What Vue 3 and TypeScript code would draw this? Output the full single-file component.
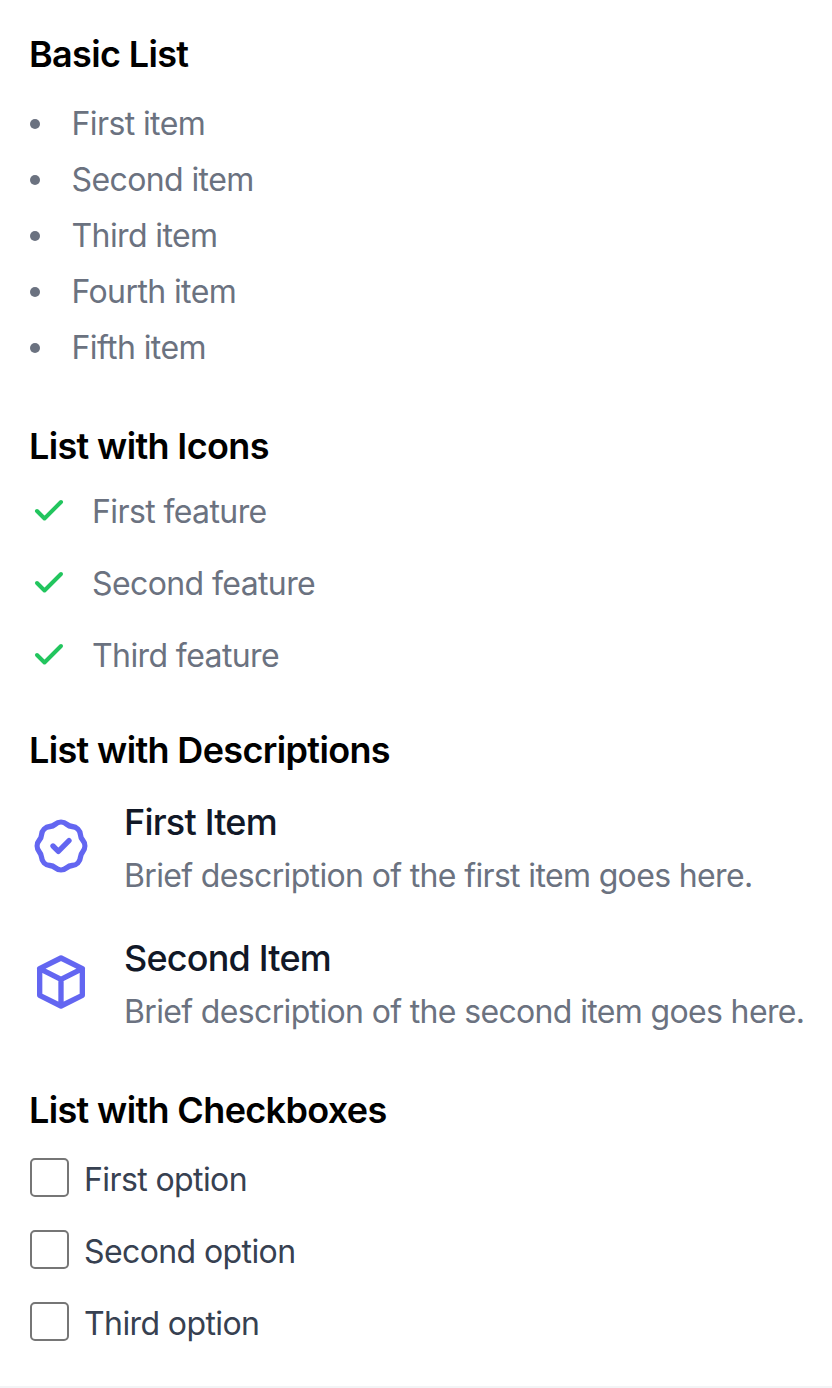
<script setup lang="ts">
const basic: string[] = ['First item', 'Second item', 'Third item', 'Fourth item', 'Fifth item']
const features: string[] = ['First feature', 'Second feature', 'Third feature']
const options: string[] = ['First option', 'Second option', 'Third option']
</script>

<template>
  <main class="page">
    <section class="basic">
      <h2>Basic List</h2>
      <ul class="disc">
        <li v-for="item in basic" :key="item">{{ item }}</li>
      </ul>
    </section>

    <section class="icons">
      <h2>List with Icons</h2>
      <ul class="features">
        <li v-for="item in features" :key="item">
          <svg class="check" viewBox="0 0 24 24" fill="none" stroke="currentColor" stroke-width="2.67" stroke-linecap="round" stroke-linejoin="round">
            <path d="M20 6L9 17l-5-5" />
          </svg>
          <span>{{ item }}</span>
        </li>
      </ul>
    </section>

    <section class="descriptions">
      <h2>List with Descriptions</h2>
      <ul class="desc">
        <li>
          <svg class="big" viewBox="0 0 24 24" fill="none" stroke="currentColor" stroke-width="2" stroke-linecap="round" stroke-linejoin="round">
            <path d="M9 12l2 2 4-4M7.835 4.697a3.42 3.42 0 001.946-.806 3.42 3.42 0 014.438 0 3.42 3.42 0 001.946.806 3.42 3.42 0 013.138 3.138 3.42 3.42 0 00.806 1.946 3.42 3.42 0 010 4.438 3.42 3.42 0 00-.806 1.946 3.42 3.42 0 01-3.138 3.138 3.42 3.42 0 00-1.946.806 3.42 3.42 0 01-4.438 0 3.42 3.42 0 00-1.946-.806 3.42 3.42 0 01-3.138-3.138 3.42 3.42 0 00-.806-1.946 3.42 3.42 0 010-4.438 3.42 3.42 0 00.806-1.946 3.42 3.42 0 013.138-3.138z" />
          </svg>
          <div>
            <h3>First Item</h3>
            <p>Brief description of the first item goes here.</p>
          </div>
        </li>
        <li>
          <svg class="big" viewBox="0 0 24 24" fill="none" stroke="currentColor" stroke-width="2" stroke-linecap="round" stroke-linejoin="round">
            <path d="M20 7l-8-4-8 4m16 0l-8 4m8-4v10l-8 4m0-10L4 7m8 4v10M4 7v10l8 4" />
          </svg>
          <div>
            <h3>Second Item</h3>
            <p>Brief description of the second item goes here.</p>
          </div>
        </li>
      </ul>
    </section>

    <section class="boxes">
      <h2>List with Checkboxes</h2>
      <ul class="options">
        <li v-for="item in options" :key="item">
          <label>
            <input type="checkbox" />
            <span>{{ item }}</span>
          </label>
        </li>
      </ul>
    </section>
    <div class="strip"></div>
  </main>
</template>

<style scoped>
.page {
  box-sizing: border-box;
  width: 832px;
  height: 1388px;
  padding: 30px 0 0 30px;
  position: relative;
  font-family: Inter, "Liberation Sans", sans-serif;
  font-size: 32px;
  line-height: 48px;
  letter-spacing: -0.6px;
  background: #fff;
  overflow: hidden;
}
h2 {
  margin: 0 0 0 -1px;
  font-size: 36px;
  line-height: 48px;
  font-weight: 600;
  letter-spacing: -0.65px;
  color: #000;
}
ul {
  margin: 0;
  padding: 0;
  list-style: none;
}
.disc {
  margin-top: 18px;
  color: #6b7280;
}
.disc li {
  display: flex;
  align-items: center;
  height: 56px;
  line-height: 56px;
}
.disc li::before {
  content: "";
  width: 10px;
  height: 10px;
  margin-right: 31.5px;
  border-radius: 50%;
  background: currentColor;
}
.icons {
  margin-top: 46px;
}
.features {
  margin-top: 18px;
  color: #6b7280;
}
.features li {
  display: flex;
  align-items: center;
  height: 48px;
  margin-bottom: 24px;
}
.check {
  width: 36px;
  height: 36px;
  flex: none;
  margin: 0 25px 2px 1px;
  color: #22c55e;
}
.descriptions {
  margin-top: 46px;
}
.desc {
  margin-top: 20px;
}
.desc li {
  display: flex;
  align-items: center;
  margin-bottom: 29px;
}
.big {
  width: 64px;
  height: 64px;
  flex: none;
  margin: 0 31px 4px -1px;
  color: #6366f1;
}
h3 {
  margin: 0;
  font-size: 36px;
  line-height: 57px;
  font-weight: 500;
  letter-spacing: -0.8px;
  color: #111827;
}
p {
  margin: 0;
  line-height: 50px;
  white-space: nowrap;
  letter-spacing: -0.65px;
  color: #6b7280;
}
.boxes {
  margin-top: 49px;
}
.options {
  margin-top: 22px;
  color: #374151;
}
.options li {
  margin-bottom: 24px;
}
label {
  display: flex;
  align-items: center;
  height: 48px;
}
input {
  appearance: none;
  box-sizing: border-box;
  width: 39px;
  height: 39px;
  margin: 0 15px 5px 0;
  border: 2px solid #767676;
  border-radius: 5px;
  background: #fff;
}
.strip {
  position: absolute;
  left: 0;
  right: 0;
  bottom: 0;
  height: 2px;
  background: #f3f4f6;
}
</style>
